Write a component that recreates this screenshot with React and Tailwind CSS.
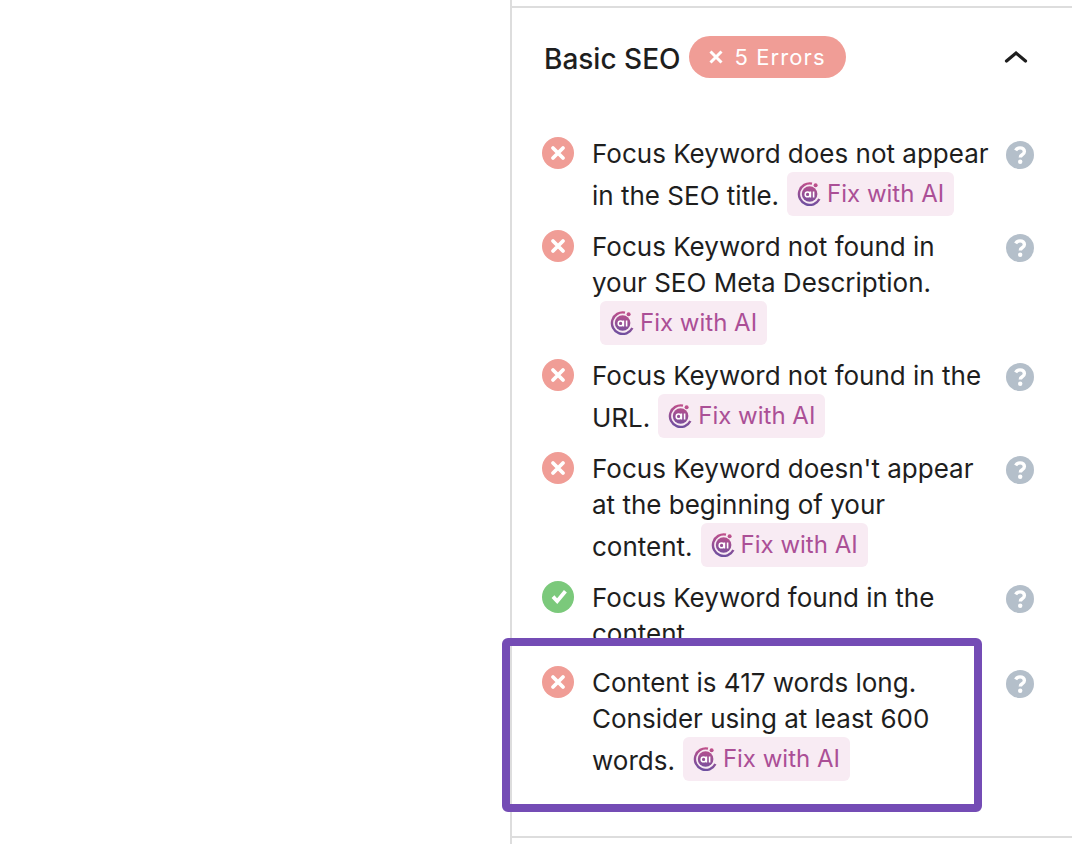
import React from "react";

const checks = [
  { id: "title", text: "Focus Keyword does not appear in the SEO title.", ok: false },
  { id: "meta", text: "Focus Keyword not found in your SEO Meta Description.", ok: false },
  { id: "url", text: "Focus Keyword not found in the URL.", ok: false },
  { id: "intro", text: "Focus Keyword doesn't appear at the beginning of your content.", ok: false },
  { id: "content", text: "Focus Keyword found in the content.", ok: true },
  {
    id: "length",
    text: "Content is 417 words long. Consider using at least 600 words.",
    ok: false,
    highlight: true,
  },
];

function StatusIcon({ ok }) {
  return (
    <svg className="mt-px h-8 w-8 shrink-0" viewBox="0 0 32 32" fill="none" role="img" aria-label={ok ? "Passed" : "Failed"}>
      <circle cx="16" cy="16" r="16" fill={ok ? "#7bc97b" : "#f09d96"} />
      {ok ? (
        <path d="M11 15.6l4.2 4.6L23.4 10.2" stroke="#fff" strokeWidth="3.8" />
      ) : (
        <path d="M11 11l10 10M21 11L11 21" stroke="#fff" strokeWidth="3.8" strokeLinecap="round" />
      )}
    </svg>
  );
}

function AiLogo() {
  return (
    <svg className="h-6 w-6 shrink-0" viewBox="0 0 24 24" fill="none" aria-hidden="true">
      <defs>
        <linearGradient id="ai-gradient" x1="14" y1="0" x2="10" y2="24" gradientUnits="userSpaceOnUse">
          <stop offset="0" stopColor="#c4508a" />
          <stop offset="1" stopColor="#6b4fa0" />
        </linearGradient>
      </defs>
      <path d="M15 1.6A10.8 10.8 0 1 0 22.4 17" stroke="url(#ai-gradient)" strokeWidth="2.4" />
      <circle cx="12.6" cy="12" r="7.8" fill="url(#ai-gradient)" />
      <circle cx="18.6" cy="3.2" r="2" fill="url(#ai-gradient)" />
      <circle cx="10.6" cy="12.4" r="2.4" stroke="#fff" strokeWidth="1.5" />
      <path d="M13.4 9.4v6.2M16.6 9.4v6.2" stroke="#fff" strokeWidth="1.6" />
    </svg>
  );
}

function FixButton() {
  return (
    <button
      type="button"
      className="ml-2 inline-flex h-11 items-center gap-1.5 rounded-md bg-[#f8ebf3] px-2.5 align-[-1px] text-2xl whitespace-nowrap text-[#ab4f96]"
    >
      <AiLogo />
      Fix with AI
    </button>
  );
}

function HelpLink() {
  return (
    <a href="#help" aria-label="Learn more" className="mt-[5px] ml-auto shrink-0">
      <svg className="h-7 w-7" viewBox="0 0 28 28" fill="none">
        <circle cx="14" cy="14" r="14" fill="#b4bfca" />
        <path
          d="M9.6 9.4C10.6 7.7 12 6.9 14.1 6.9c2.5 0 4.3 1.4 4.3 3.6 0 1.7-.9 2.500-2.200 3.300-1.300.8-1.900 1.200-1.900 2.700"
          stroke="#fff"
          strokeWidth="3.4"
        />
        <circle cx="14.2" cy="20.8" r="2.2" fill="#fff" />
      </svg>
    </a>
  );
}

function CheckItem({ check }) {
  return (
    <li className="relative flex items-start">
      <StatusIcon ok={check.ok} />
      <div className="ml-[18px] w-[400px] text-[26px] leading-9">
        {check.text}
        {!check.ok && <FixButton />}
      </div>
      <HelpLink />
      {check.highlight && (
        <div className="pointer-events-none absolute -top-[27px] right-[52px] -bottom-[31px] -left-10 rounded-md border-8 border-[#744cb5]" />
      )}
    </li>
  );
}

function App() {
  return (
    <div className="flex min-h-screen bg-white font-['Inter',sans-serif] text-[#1e1e1e]">
      <main className="flex-1" />

      {/* Sidebar */}
      <aside className="w-[562px] border-l-2 border-[#dddddd] pt-1.5">
        <section className="border-y-2 border-[#dddddd] pr-[38px] pb-[55px] pl-[30px]">
          <h2>
            <button type="button" className="mt-7 flex w-full items-center text-left leading-9">
              <span className="ml-0.5 pt-1 text-[28px] font-medium">Basic SEO</span>
              <span className="ml-2 flex h-[42px] items-center gap-3 rounded-full bg-[#f09d96] px-5 text-[22px] tracking-wider text-white">
                <svg className="h-3.5 w-3.5" viewBox="0 0 14 14" fill="none" aria-hidden="true">
                  <path d="M1.5 1.5l11 11M12.5 1.5l-11 11" stroke="#fff" strokeWidth="3" />
                </svg>
                5 Errors
              </span>
              <svg className="mr-1.5 ml-auto h-6 w-6" viewBox="0 0 24 24" fill="none" aria-hidden="true">
                <path d="M2.5 16l9.5-8 9.5 8" stroke="#1e1e1e" strokeWidth="3.2" strokeLinecap="round" />
              </svg>
            </button>
          </h2>

          {/* Checks */}
          <ul className="mt-[58px] flex flex-col gap-[13px]">
            {checks.map((check) => (
              <CheckItem key={check.id} check={check} />
            ))}
          </ul>
        </section>
      </aside>
    </div>
  );
}

export default App;
